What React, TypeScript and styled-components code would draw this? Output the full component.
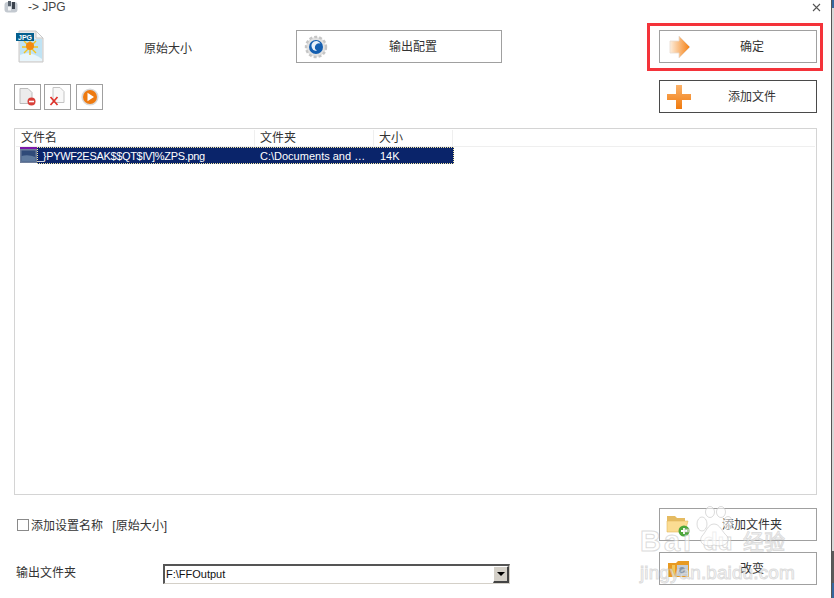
import React from "react";
import styled, { createGlobalStyle } from "styled-components";

const Global = createGlobalStyle`
  html, body { margin: 0; padding: 0; background: #fff; }
  body { font-family: "Liberation Sans", "Noto Sans CJK SC", sans-serif; font-size: 12px; color: #333; }
`;

const Stage = styled.div`
  position: relative;
  width: 834px;
  height: 598px;
  overflow: hidden;
  display: flex;
  background: #fff;
`;

const Dialog = styled.div`
  width: 831px;
  height: 598px;
  display: flex;
  flex-direction: column;
  flex: none;
`;

const EdgeStrip = styled.div`
  width: 3px;
  height: 598px;
  flex: none;
  display: flex;
  flex-direction: column;
  border-left: 1px solid #555;
  box-sizing: border-box;
  background: #d8d8d8;
`;

const EdgeFill = styled.div`
  flex: 1;
`;

const EdgeDark = styled.div`
  height: 32px;
  background: #5a5a5a;
`;

const EdgeBlue = styled.div<{ $h: number }>`
  height: ${(p) => p.$h}px;
  background: #35679f;
`;

const TitleBar = styled.div`
  height: 14px;
  display: flex;
  align-items: center;
  padding: 0 10px 0 4px;
  flex: none;
`;

const TitleText = styled.span`
  margin-left: 10px;
  font-size: 12px;
  color: #444;
  flex: 1;
`;

const TopArea = styled.div`
  display: grid;
  grid-template-columns: 296px 206px 157px 158px;
  grid-template-rows: 33px 33px;
  row-gap: 17px;
  padding-top: 16px;
  flex: none;
`;

const PresetCell = styled.div`
  display: flex;
  align-items: center;
  padding-left: 16px;
`;

const PresetLabel = styled.span`
  margin: 2px 0 0 100px;
  font-size: 12px;
  color: #333;
  white-space: nowrap;
`;

const ToolCell = styled.div`
  grid-column: 1 / 4;
  display: flex;
  align-items: flex-start;
  padding: 4px 0 0 14px;
`;

const ToolGroup = styled.div`
  display: flex;
  gap: 3px;
`;

const ToolBtn = styled.div<{ $gap?: number }>`
  width: 27px;
  height: 26px;
  box-sizing: border-box;
  border: 1px solid #a0a0a0;
  display: flex;
  align-items: center;
  justify-content: center;
  margin-left: ${(p) => p.$gap ?? 0}px;
`;

const Spacer = styled.div``;

const ActionBtn = styled.div<{ $dark?: boolean }>`
  box-sizing: border-box;
  position: relative;
  height: 33px;
  padding: 0 0 2px 28px;
  border: 1px solid ${(p) => (p.$dark ? "#4a4a4a" : "#a0a0a0")};
  display: flex;
  align-items: center;
  justify-content: center;
  color: #333;
  background: transparent;
`;

const BtnIcon = styled.span<{ $left: number }>`
  position: absolute;
  left: ${(p) => p.$left}px;
  top: 50%;
  transform: translateY(-50%);
  display: flex;
`;

const Highlight = styled.div`
  position: absolute;
  left: 647px;
  top: 23px;
  width: 176px;
  height: 48px;
  box-sizing: border-box;
  border: 3px solid #f4333a;
  pointer-events: none;
`;

const ListBox = styled.div`
  margin: 15px 0 0 14px;
  width: 803px;
  height: 367px;
  box-sizing: border-box;
  border: 1px solid #d4d4d4;
  padding: 1px;
  flex: none;
`;

const ColGrid = styled.div`
  display: grid;
  grid-template-columns: 240px 119px 79px 1fr;
`;

const HeadRow = styled(ColGrid)`
  height: 16px;
  border-bottom: 1px solid #efefef;
`;

const HeadCell = styled.div`
  border-right: 1px solid #efefef;
  margin-right: 1px;
  padding-left: 4px;
  font-size: 12px;
  line-height: 17px;
  color: #333;
  &:first-child { padding-left: 5px; }
  &:last-child { border-right: 0; }
`;

const FileRow = styled.div`
  width: 438px;
  height: 17px;
  display: flex;
  position: relative;
`;

const RowThumb = styled.div`
  width: 17px;
  margin-left: 4px;
  flex: none;
  display: flex;
`;

const RowBody = styled.div`
  flex: 1;
  display: grid;
  grid-template-columns: 219px 119px 1fr;
  background: #0a246a;
  color: #fff;
  font-size: 11px;
  line-height: 18px;
  outline: 1px dotted #f2e6a0;
  outline-offset: -1px;
  white-space: nowrap;
  overflow: hidden;
`;

const RowCell = styled.span<{ $pad?: number; $tight?: boolean }>`
  padding-left: ${(p) => p.$pad ?? 0}px;
  letter-spacing: ${(p) => (p.$tight ? "-0.33px" : "0")};
  overflow: hidden;
`;

const OptionRow = styled.div`
  display: flex;
  align-items: flex-start;
  height: 71px;
  flex: none;
`;

const LeftOption = styled.div`
  width: 659px;
  padding: 21px 0 0 17px;
  box-sizing: border-box;
  display: flex;
  align-items: center;
  color: #333;
  word-spacing: 6px;
`;

const CheckBox = styled.span`
  width: 12px;
  height: 12px;
  box-sizing: border-box;
  border: 1px solid #8a8a8a;
  margin-right: 2px;
  flex: none;
`;

const RightStack = styled.div`
  width: 158px;
  display: flex;
  flex-direction: column;
  gap: 11px;
  padding-top: 13px;
  margin-bottom: -60px;
`;

const OutputRow = styled.div`
  display: flex;
  align-items: center;
  padding-left: 16px;
  height: 20px;
  margin-top: -2px;
  flex: none;
`;

const OutputLabel = styled.span`
  width: 147px;
  margin-top: -5px;
  color: #333;
  flex: none;
`;

const ComboBox = styled.div`
  width: 347px;
  height: 20px;
  box-sizing: border-box;
  border-top: 2px solid #555;
  border-left: 2px solid #555;
  border-right: 1px solid #d4d0c8;
  border-bottom: 1px solid #d4d0c8;
  display: flex;
  align-items: stretch;
  font-size: 11px;
  color: #111;
`;

const ComboValue = styled.div`
  flex: 1;
  padding-left: 1px;
  line-height: 17px;
`;

const ComboArrow = styled.div`
  width: 16px;
  background: #d4d0c8;
  border-right: 2px solid #444;
  border-bottom: 2px solid #444;
  border-top: 1px solid #fff;
  border-left: 1px solid #fff;
  box-sizing: border-box;
  display: flex;
  align-items: center;
  justify-content: center;
`;

const Arrow = styled.span`
  width: 0;
  height: 0;
  border-left: 4px solid transparent;
  border-right: 4px solid transparent;
  border-top: 4px solid #000;
`;

const Watermark = styled.div`
  position: absolute;
  left: 640px;
  top: 506px;
  width: 150px;
  height: 76px;
  pointer-events: none;
  white-space: nowrap;
  color: rgba(255, 255, 255, 0.55);
  -webkit-text-stroke: 1px rgba(190, 190, 190, 0.55);
`;

const WatermarkBig = styled.div`
  display: flex;
  align-items: flex-end;
  height: 50px;
  font-weight: 700;
`;

const BaiText = styled.span`
  font-size: 29px;
  letter-spacing: 3px;
  width: 63px;
  line-height: 30px;
`;

const DuText = styled.span`
  font-size: 24px;
  width: 40px;
  line-height: 28px;
`;

const CnText = styled.span`
  font-size: 21px;
  line-height: 28px;
  font-weight: 400;
`;

const WatermarkSmall = styled.div`
  font-size: 19px;
  line-height: 22px;
  margin-top: 6px;
  letter-spacing: 0.1px;
`;

const PawWrap = styled.span`
  position: absolute;
  left: 54px;
  top: 0;
  display: flex;
`;

const PawMark = () => (
  <svg width="40" height="46" viewBox="0 0 40 46" fill="rgba(255,255,255,.55)" stroke="rgba(190,190,190,.55)" strokeWidth="1">
    <ellipse cx="8" cy="18" rx="5" ry="7" />
    <ellipse cx="16" cy="6" rx="4.5" ry="5.5" />
    <ellipse cx="27" cy="6" rx="4.5" ry="5.5" />
    <ellipse cx="34" cy="17" rx="4.5" ry="6.5" />
    <path d="M20 18 C14 18 12 26 8 30 C4 36 10 42 20 39 C30 42 37 36 33 30 C28 26 26 18 20 18 Z" />
  </svg>
);

const AppIcon = () => (
  <svg width="14" height="12" viewBox="0 0 14 12">
    <rect x="0.5" y="1" width="13" height="10.5" rx="3" fill="#c3c9d0" />
    <rect x="4" y="0" width="3" height="5" fill="#59636e" />
    <rect x="8" y="1" width="3" height="7" fill="#3a424c" />
    <rect x="4" y="6" width="3" height="3.5" fill="#f2f4f6" />
  </svg>
);

const CloseIcon = () => (
  <svg width="9" height="9" viewBox="0 0 9 9">
    <path d="M1 1 L8 8 M8 1 L1 8" stroke="#555" strokeWidth="1.1" />
  </svg>
);

const JpgIcon = () => (
  <svg width="28" height="33" viewBox="0 0 28 33">
    <path d="M3 1 H20 L27 8 V32 H3 Z" fill="#eaeaea" stroke="#c8c8c8" />
    <path d="M20 1 V8 H27 Z" fill="#fafafa" stroke="#c8c8c8" />
    <rect x="4" y="9" width="22" height="22" fill="#bfe3f4" />
    <path d="M4 31 V25 Q14 20 26 29 V31 Z" fill="#e8f5fb" />
    <g stroke="#f6c21c" strokeWidth="1.4">
      <path d="M14 9 V25 M6 17 H22 M8 11 L20 23 M20 11 L8 23" />
    </g>
    <circle cx="14" cy="16" r="4" fill="#f28a12" />
    <rect x="0" y="3" width="18" height="8" fill="#045f8e" />
    <text x="9" y="9.8" textAnchor="middle" fontSize="7" fontWeight="700" fill="#fff" fontFamily="Liberation Sans">JPG</text>
  </svg>
);

const RemoveIcon = () => (
  <svg width="17" height="18" viewBox="0 0 17 18">
    <path d="M1 0.5 H9 L13 4.5 V15.5 H1 Z" fill="#ececec" stroke="#bdbdbd" />
    <circle cx="12.5" cy="13.5" r="4" fill="#d8403a" />
    <rect x="10" y="12.7" width="5" height="1.6" fill="#fff" />
  </svg>
);

const ClearIcon = () => (
  <svg width="17" height="20" viewBox="0 0 17 20">
    <path d="M4 0.5 H11 L15 4.5 V15.5 H4 Z" fill="#f8f8f8" stroke="#c4c4c4" />
    <path d="M1.5 10 L8.5 18 M8.5 10 L1.5 18" stroke="#e0342c" strokeWidth="1.7" />
  </svg>
);

const PlayIcon = () => (
  <svg width="18" height="18" viewBox="0 0 18 18">
    <circle cx="9" cy="9" r="8.6" fill="#d9d9d9" />
    <circle cx="9" cy="9" r="7" fill="#ee7a10" />
    <path d="M6.5 4.8 L13 9 L6.5 13.2 Z" fill="#fff" />
  </svg>
);

const GearIcon = () => (
  <svg width="24" height="24" viewBox="0 0 24 24">
    <circle cx="12" cy="12" r="10" fill="#e2e2e2" stroke="#c6c6c6" strokeWidth="2.4" strokeDasharray="3 2" />
    <circle cx="12" cy="12" r="7" fill="#155fb0" />
    <path d="M8 13 A4.8 4.8 0 0 1 16.5 8.5 A4 4 0 0 0 11 11.5 A3.5 3.5 0 0 0 13 15.5 A4 4 0 0 1 8 13 Z" fill="#e8f0fa" />
  </svg>
);

const ArrowIcon = () => (
  <svg width="22" height="24" viewBox="0 0 22 24">
    <defs>
      <linearGradient id="arrowFill" x1="0" x2="1" y1="0" y2="0">
        <stop offset="0" stopColor="#fdeedd" />
        <stop offset="1" stopColor="#f57f10" />
      </linearGradient>
    </defs>
    <path d="M1 6 H10 V1 L21 12 L10 23 V18 H1 Z" fill="url(#arrowFill)" stroke="#e8dcd0" strokeWidth="0.8" />
  </svg>
);

const PlusIcon = () => (
  <svg width="24" height="24" viewBox="0 0 24 24">
    <defs>
      <linearGradient id="plusFill" x1="0" x2="0" y1="0" y2="1">
        <stop offset="0" stopColor="#fbb26a" />
        <stop offset="1" stopColor="#ef7a0e" />
      </linearGradient>
    </defs>
    <path d="M9 0 H15 V9 H24 V15 H15 V24 H9 V15 H0 V9 H9 Z" fill="url(#plusFill)" />
  </svg>
);

const FolderAddIcon = () => (
  <svg width="24" height="24" viewBox="0 0 24 24">
    <path d="M1 3 H9 L11 5 H19 V18 H1 Z" fill="#e5bb62" />
    <path d="M1 8 H22 L19 19 H1 Z" fill="#fbdc92" stroke="#e2b85f" strokeWidth="0.6" />
    <circle cx="18" cy="18" r="5.5" fill="#4da73a" />
    <path d="M18 15 V21 M15 18 H21" stroke="#fff" strokeWidth="1.8" />
  </svg>
);

const FolderChangeIcon = () => (
  <svg width="22" height="18" viewBox="0 0 22 18">
    <path d="M0 3 H8 L10 1 H21 V17 H0 Z" fill="#e89a22" />
    <rect x="4" y="5" width="3" height="12" fill="#f3c75a" />
    <rect x="9" y="5" width="11" height="11" fill="#c4ccd6" />
    <circle cx="14" cy="10" r="3" fill="#8394a8" />
  </svg>
);

const ThumbIcon = () => (
  <svg width="17" height="17" viewBox="0 0 17 17">
    <rect x="0" y="0" width="17" height="2" fill="#7a17a8" />
    <rect x="0" y="2" width="17" height="14" fill="#6f7f9c" />
    <rect x="1.5" y="3.5" width="14" height="11" fill="#2f4a78" />
    <path d="M1.5 9 Q8 7 15.5 10 V14.5 H1.5 Z" fill="#5f7a9e" />
  </svg>
);

export default function App() {
  return (
    <Stage>
      <Global />
      <Dialog>
        <TitleBar>
          <AppIcon />
          <TitleText>-&gt; JPG</TitleText>
          <CloseIcon />
        </TitleBar>
        <TopArea>
          <PresetCell>
            <JpgIcon />
            <PresetLabel>原始大小</PresetLabel>
          </PresetCell>
          <ActionBtn>
            <BtnIcon $left={7}><GearIcon /></BtnIcon>
            输出配置
          </ActionBtn>
          <Spacer />
          <ActionBtn>
            <BtnIcon $left={9}><ArrowIcon /></BtnIcon>
            确定
          </ActionBtn>
          <ToolCell>
            <ToolGroup>
              <ToolBtn><RemoveIcon /></ToolBtn>
              <ToolBtn><ClearIcon /></ToolBtn>
              <ToolBtn $gap={2}><PlayIcon /></ToolBtn>
            </ToolGroup>
          </ToolCell>
          <ActionBtn $dark>
            <BtnIcon $left={7}><PlusIcon /></BtnIcon>
            添加文件
          </ActionBtn>
        </TopArea>
        <ListBox>
          <HeadRow>
            <HeadCell>文件名</HeadCell>
            <HeadCell>文件夹</HeadCell>
            <HeadCell>大小</HeadCell>
            <HeadCell />
          </HeadRow>
          <FileRow>
            <RowThumb><ThumbIcon /></RowThumb>
            <RowBody>
              <RowCell $tight>{"_}PYWF2ESAK$$QT$IV]%ZPS.png"}</RowCell>
              <RowCell $pad={4}>{"C:\\Documents and …"}</RowCell>
              <RowCell $pad={5}>14K</RowCell>
            </RowBody>
          </FileRow>
        </ListBox>
        <OptionRow>
          <LeftOption>
            <CheckBox />
            添加设置名称 [原始大小]
          </LeftOption>
          <RightStack>
            <ActionBtn>
              <BtnIcon $left={6}><FolderAddIcon /></BtnIcon>
              添加文件夹
            </ActionBtn>
            <ActionBtn>
              <BtnIcon $left={8}><FolderChangeIcon /></BtnIcon>
              改变
            </ActionBtn>
          </RightStack>
        </OptionRow>
        <OutputRow>
          <OutputLabel>输出文件夹</OutputLabel>
          <ComboBox>
            <ComboValue>{"F:\\FFOutput"}</ComboValue>
            <ComboArrow><Arrow /></ComboArrow>
          </ComboBox>
        </OutputRow>
      </Dialog>
      <EdgeStrip>
        <EdgeBlue $h={8} />
        <EdgeFill />
        <EdgeDark />
        <EdgeBlue $h={15} />
      </EdgeStrip>
      <Highlight />
      <Watermark>
        <PawWrap><PawMark /></PawWrap>
        <WatermarkBig>
          <BaiText>Bai</BaiText>
          <DuText>du</DuText>
          <CnText>经验</CnText>
        </WatermarkBig>
        <WatermarkSmall>jingyan.baidu.com</WatermarkSmall>
      </Watermark>
    </Stage>
  );
}
